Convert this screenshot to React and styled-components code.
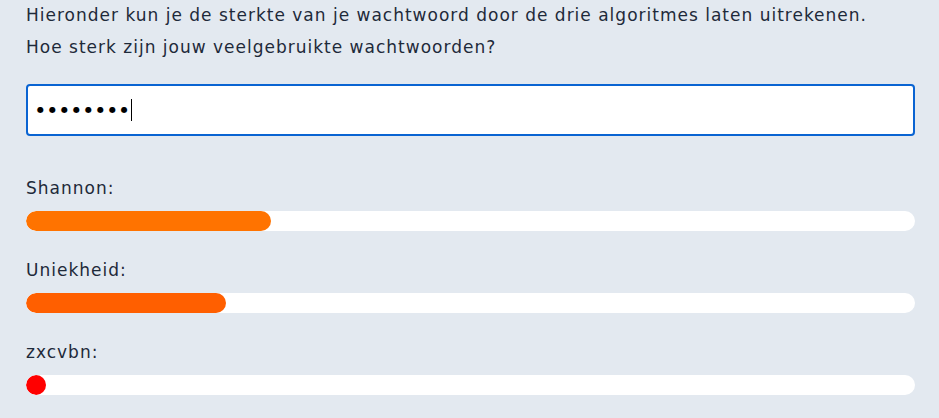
import React from "react";
import styled, { createGlobalStyle } from "styled-components";

const GlobalStyle = createGlobalStyle`
  html, body {
    margin: 0;
    padding: 0;
    background: #e3e9f0;
  }
  body {
    font-family: "DejaVu Sans", "Open Sans", sans-serif;
    color: #1e2a3a;
    overflow: hidden;
  }
`;

const Page = styled.main`
  width: 939px;
  height: 418px;
  box-sizing: border-box;
  padding: 0 24px 0 26px;
  display: flex;
  flex-direction: column;
`;

const Intro = styled.p`
  margin: -1px 0 0;
  font-size: 17px;
  line-height: 32px;
  letter-spacing: 1px;
  color: #1e2a3a;
`;

const PasswordBox = styled.div`
  margin-top: 21px;
  height: 52px;
  box-sizing: border-box;
  border: 2px solid #0a64d2;
  border-radius: 4px;
  background: #ffffff;
  display: flex;
  align-items: center;
  padding: 0 9px;
`;

const Dots = styled.span`
  font-family: "DejaVu Sans", sans-serif;
  font-size: 8px;
  letter-spacing: 5px;
  color: #000;
  line-height: 1;
`;

const Caret = styled.span`
  display: inline-block;
  width: 1.5px;
  height: 22px;
  background: #000;
  margin-left: -2px;
`;

const Meter = styled.section`
  margin-top: ${(p) => p.$top}px;
  display: flex;
  flex-direction: column;
`;

const MeterLabel = styled.div`
  font-size: 17px;
  line-height: 24px;
  letter-spacing: 1px;
  color: #1e2a3a;
`;

const Track = styled.div`
  margin-top: 11px;
  height: 20px;
  border-radius: 10px;
  background: #ffffff;
  overflow: hidden;
`;

const Fill = styled.div`
  height: 100%;
  min-width: 20px;
  border-radius: 10px;
  background: ${(p) => p.$color};
`;

const meters = [
  { label: "Shannon:", pct: 27.6, color: "#ff7300" },
  { label: "Uniekheid:", pct: 22.5, color: "#ff5f00" },
  { label: "zxcvbn:", pct: 0, color: "#ff0000" },
];

export default function App() {
  return (
    <>
      <GlobalStyle />
      <Page>
        <Intro>
          Hieronder kun je de sterkte van je wachtwoord door de drie algoritmes laten uitrekenen.
          <br />
          Hoe sterk zijn jouw veelgebruikte wachtwoorden?
        </Intro>
        <PasswordBox role="textbox" aria-label="Wachtwoord">
          <Dots>●●●●●●●●</Dots>
          <Caret />
        </PasswordBox>
        {meters.map((m, i) => (
          <Meter key={m.label} $top={i === 0 ? 40 : 27}>
            <MeterLabel>{m.label}</MeterLabel>
            <Track>
              <Fill $color={m.color} style={{ width: `${m.pct}%` }} />
            </Track>
          </Meter>
        ))}
      </Page>
    </>
  );
}
